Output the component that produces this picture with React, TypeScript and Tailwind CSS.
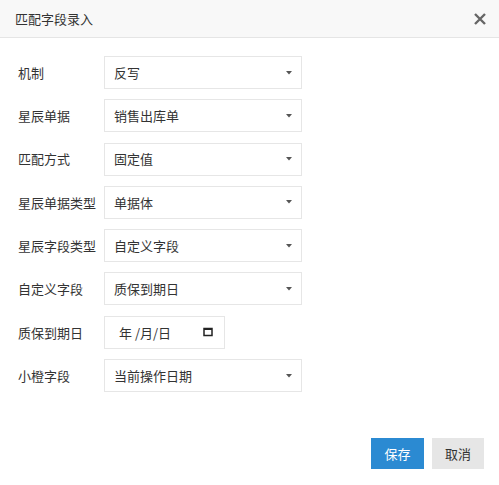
import React from "react";

const rows: { label: string; value: string; date?: boolean }[] = [
  { label: "机制", value: "反写" },
  { label: "星辰单据", value: "销售出库单" },
  { label: "匹配方式", value: "固定值" },
  { label: "星辰单据类型", value: "单据体" },
  { label: "星辰字段类型", value: "自定义字段" },
  { label: "自定义字段", value: "质保到期日" },
  { label: "质保到期日", value: "", date: true },
  { label: "小橙字段", value: "当前操作日期" },
];

export default function App() {
  return (
    <div
      className="w-[499px] h-[485px] bg-white text-[13px] text-[#333] flex flex-col"
      style={{ fontFamily: '"Noto Sans CJK SC", "Noto Sans", sans-serif' }}
    >
      <div className="h-[38px] bg-[#f8f8f8] border-b border-[#e5e5e5] flex items-center justify-between pl-[15px] pr-[12px]">
        <span className="text-[13px] text-[#333]">匹配字段录入</span>
        <svg width="14" height="14" viewBox="0 0 14 14">
          <path d="M2 2 L12 12 M12 2 L2 12" stroke="#666" strokeWidth="2.4" strokeLinecap="butt" />
        </svg>
      </div>
      <div className="flex flex-col gap-[10.3px] pt-[18px]">
        {rows.map((r) => (
          <div key={r.label} className="flex items-center h-[33px]">
            <div className="w-[104px] pl-[18px] text-[13px] text-[#333]">{r.label}</div>
            {r.date ? (
              <div className="w-[121px] h-[33px] border border-[#e6e6e6] flex items-center justify-between pl-[14px] pr-[11px]">
                <span className="text-[13px] text-[#333]">年 /月/日</span>
                <svg width="10" height="10" viewBox="0 0 10 10">
                  <rect x="1" y="1.5" width="8" height="7" fill="none" stroke="#222" strokeWidth="1.5" />
                  <rect x="1" y="1" width="8" height="2" fill="#222" />
                </svg>
              </div>
            ) : (
              <div className="w-[198px] h-[33px] border border-[#e6e6e6] flex items-center justify-between pl-[9px] pr-[9px]">
                <span className="text-[13px] text-[#333]">{r.value}</span>
                <svg width="6" height="4" viewBox="0 0 6 4">
                  <path d="M0 0 L6 0 L3 3.5 Z" fill="#555" />
                </svg>
              </div>
            )}
          </div>
        ))}
      </div>
      <div className="flex justify-end gap-[8px] pr-[15px] mt-[46px]">
        <button className="w-[53px] h-[31px] bg-[#2b8ad2] text-white text-[13px]">保存</button>
        <button className="w-[52px] h-[31px] bg-[#e6e6e6] text-[#333] text-[13px]">取消</button>
      </div>
    </div>
  );
}
